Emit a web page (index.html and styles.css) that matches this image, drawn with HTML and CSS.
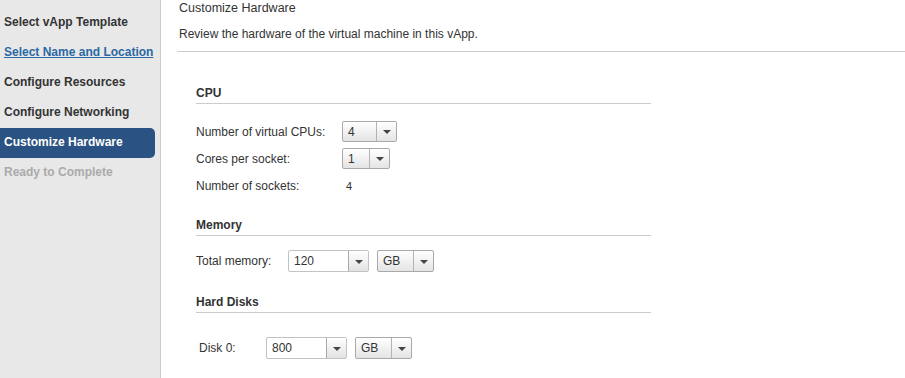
FILE: index.html
```html
<!DOCTYPE html>
<html lang="en">

<head>
  <meta charset="UTF-8">
  <title>Customize Hardware</title>
  <link rel="stylesheet" href="styles.css">
</head>

<body>
  <div id="wizard">
    <div class="steps">
      <div class="step">Select vApp Template</div>
      <div class="step step-link">Select Name and Location</div>
      <div class="step">Configure Resources</div>
      <div class="step">Configure Networking</div>
      <div class="step step-active">Customize Hardware</div>
      <div class="step step-disabled">Ready to Complete</div>
    </div>
    <div class="content">
      <div class="page-head">
        <h1 class="page-title">Customize Hardware</h1>
        <p class="page-desc">Review the hardware of the virtual machine in this vApp.</p>
      </div>
      <div class="form">
        <h2 class="section-title section-cpu">CPU</h2>
        <div class="row row-first">
          <span class="label label-cpu">Number of virtual CPUs:</span>
          <div class="select select-cpus">
            <span class="select-value">4</span>
            <span class="select-btn"><i class="caret"></i></span>
          </div>
        </div>
        <div class="row">
          <span class="label label-cpu">Cores per socket:</span>
          <div class="select select-cores">
            <span class="select-value">1</span>
            <span class="select-btn"><i class="caret"></i></span>
          </div>
        </div>
        <div class="row">
          <span class="label label-cpu">Number of sockets:</span>
          <span class="plain-value">4</span>
        </div>

        <h2 class="section-title section-memory">Memory</h2>
        <div class="row row-memory">
          <span class="label label-memory">Total memory:</span>
          <div class="combo">
            <span class="combo-input">120</span>
            <span class="select-btn"><i class="caret"></i></span>
          </div>
          <div class="select select-unit">
            <span class="select-value">GB</span>
            <span class="select-btn"><i class="caret"></i></span>
          </div>
        </div>

        <h2 class="section-title section-disks">Hard Disks</h2>
        <div class="row row-disk">
          <span class="label label-disk">Disk 0:</span>
          <div class="combo">
            <span class="combo-input">800</span>
            <span class="select-btn"><i class="caret"></i></span>
          </div>
          <div class="select select-unit">
            <span class="select-value">GB</span>
            <span class="select-btn"><i class="caret"></i></span>
          </div>
        </div>
      </div>
    </div>
  </div>
</body>

</html>
```

FILE: styles.css
```css
body {
  margin: 0;
  background-color: white;
  font-family: "Liberation Sans", Arial, sans-serif;
  color: #333;
}

#wizard {
  display: flex;
  height: 100vh;
}

/* left step list */
.steps {
  width: 160px;
  flex-shrink: 0;
  padding-top: 8px;
  background-color: #e8e8e8;
  border-right: 1px solid #cdcdcd;
}

.step {
  height: 30px;
  line-height: 28px;
  margin-right: 5px;
  padding-left: 4px;
  font-size: 12px;
  font-weight: bold;
  color: #333;
  white-space: nowrap;
}

.step-link {
  color: #2c68a5;
  text-decoration: underline;
}

.step-active {
  background-color: #2a5282;
  color: white;
  border-radius: 0 5px 5px 0;
}

.step-disabled {
  color: #aaa;
}

/* right side */
.content {
  flex-grow: 1;
}

.page-head {
  margin-left: 16px;
  padding-left: 2px;
  padding-bottom: 9px;
  border-bottom: 1px solid #cccccc;
}

.page-title {
  margin: 0;
  font-size: 12.5px;
  font-weight: normal;
  line-height: 16px;
}

.page-desc {
  margin: 10px 0 0 0;
  font-size: 12px;
  line-height: 16px;
}

.form {
  padding-left: 35px;
}

.section-title {
  width: 455px;
  margin: 0;
  padding-bottom: 2px;
  font-size: 12px;
  font-weight: bold;
  line-height: 16px;
  border-bottom: 1px solid #cccccc;
}

.section-cpu {
  margin-top: 33px;
}

.section-memory {
  margin-top: 21px;
}

.section-disks {
  margin-top: 22px;
}

.row {
  display: flex;
  align-items: center;
  height: 21px;
  margin-top: 6px;
  font-size: 12px;
}

.row-first {
  margin-top: 17px;
}

.row-memory {
  height: 22px;
  margin-top: 14px;
}

.row-disk {
  height: 22px;
  margin-top: 24px;
  padding-left: 3px;
}

.label {
  flex-shrink: 0;
}

.label-cpu {
  width: 146px;
}

.label-memory {
  width: 92px;
}

.label-disk {
  width: 67px;
}

.plain-value {
  padding-left: 4px;
  font-size: 11px;
}

/* dropdowns */
.select,
.combo {
  display: flex;
  box-sizing: border-box;
  height: 100%;
  border: 1px solid #a9a9a9;
  border-radius: 2px;
  font-size: 12px;
}

.select {
  background: linear-gradient(#ffffff, #e4e4e4);
}

.select-cpus {
  width: 55px;
}

.select-cores {
  width: 48px;
}

.select-unit {
  width: 57px;
  margin-left: 8px;
}

.combo {
  width: 81px;
  background-color: white;
  border-color: #c2c2c2;
}

.select-value,
.combo-input {
  flex-grow: 1;
  display: flex;
  align-items: center;
  padding-left: 5px;
}

.select-btn {
  width: 19px;
  flex-shrink: 0;
  display: flex;
  align-items: center;
  justify-content: center;
  border-left: 1px solid #b3b3b3;
}

.combo .select-btn {
  background: linear-gradient(#ffffff, #e2e2e2);
  border-left-color: #a9a9a9;
}

.caret {
  width: 0;
  height: 0;
  margin-top: 1px;
  border-left: 4px solid transparent;
  border-right: 4px solid transparent;
  border-top: 4px solid #444;
}
```
